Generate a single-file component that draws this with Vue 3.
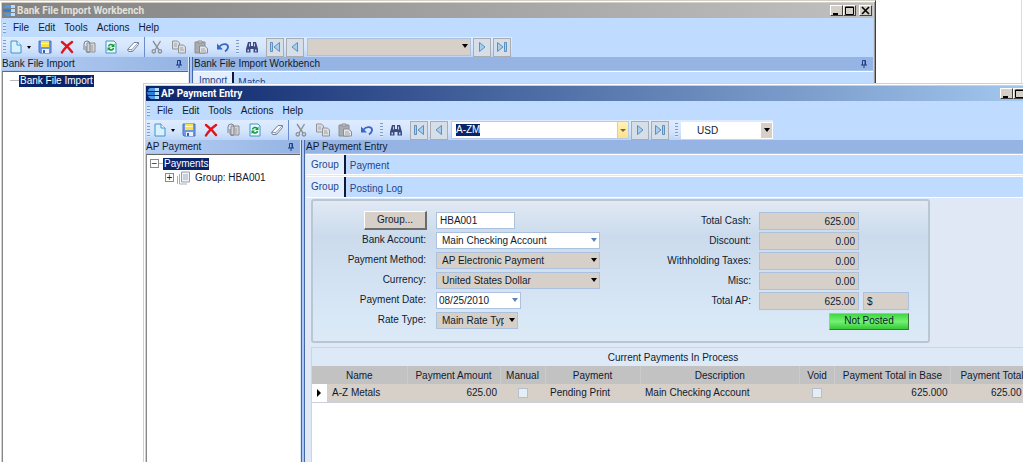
<script setup>
import { ref } from 'vue'

const menus = ['File', 'Edit', 'Tools', 'Actions', 'Help']
const editTools = ['save', 'delete', 'attach', 'refresh', 'erase']
const clipTools = ['cut', 'copy', 'paste', 'undo']

const windows = [
  { id: 'bank', title: 'Bank File Import Workbench', side: 'Bank File Import', main: 'Bank File Import Workbench' },
  { id: 'ap', title: 'AP Payment Entry', side: 'AP Payment', main: 'AP Payment Entry' },
]

const record = ref('A-ZM')
const group = ref('HBA001')
const payDate = ref('08/25/2010')

const totals = [
  { id: 'cash', label: 'Total Cash:', value: '625.00' },
  { id: 'discount', label: 'Discount:', value: '0.00' },
  { id: 'taxes', label: 'Withholding Taxes:', value: '0.00' },
  { id: 'misc', label: 'Misc:', value: '0.00' },
  { id: 'ap-total', label: 'Total AP:', value: '625.00' },
]
</script>

<template>
  <div class="desktop">
    <svg class="defs" aria-hidden="true">
      <symbol id="logo" viewBox="0 0 13 13">
        <path d="M3 1h9v3H1Q1 2 3 1z" fill="#4d9be8" />
        <path d="M0 5h12v3H1Q0 7 0 5z" fill="#2f7fd6" />
        <path d="M1 9h11v3H4Q2 11 1 9z" fill="#4d9be8" />
        <path d="M8 1h4v3H8zM8 5h4v3H8zM8 9h4v3H8z" fill="#b9dcfb" />
      </symbol>
      <symbol id="new" viewBox="0 0 14 14">
        <path d="M2 1h6l4 4v8H2z" fill="#d9f1ff" stroke="#3f94c8" />
        <path d="M8 1v4h4" fill="#fff" stroke="#3f94c8" />
      </symbol>
      <symbol id="save" viewBox="0 0 14 14">
        <path d="M1 1h12v12H2l-1-1z" fill="#6f97e0" stroke="#4a72c4" />
        <path d="M3 1h8v6H3z" fill="#f7e04a" />
        <path d="M3 3.500h8" stroke="#fff8b8" />
        <path d="M4 9h7v4H4z" fill="#e9f0fb" />
        <path d="M5 10h2v3H5z" fill="#3a62b4" />
      </symbol>
      <symbol id="delete" viewBox="0 0 14 14">
        <path d="M2 2c4 3 7 6 10 10M12 2C8 5 4 9 2 12.500" fill="none" stroke="#e0141c" stroke-width="2.400" stroke-linecap="round" />
      </symbol>
      <symbol id="attach" viewBox="0 0 14 14">
        <path d="M5 3h8v9H5z" fill="#d3d5d8" stroke="#8d8f94" />
        <path d="M4 6v4.500a2 2 0 0 0 4 0V4a3 3 0 0 0-6 0v6" fill="none" stroke="#7c7e83" />
        <path d="M10 5v6" stroke="#9b9da2" />
      </symbol>
      <symbol id="refresh" viewBox="0 0 14 14">
        <path d="M2 1h8l2 2v10H2z" fill="#eafaff" stroke="#3f94c8" />
        <path d="M4.500 6.500a2.500 2.500 0 0 1 4.500-1M9.500 8a2.500 2.500 0 0 1-4.500 1" fill="none" stroke="#159a36" stroke-width="1.500" />
        <path d="M10.500 3.500v3.500H7zM3.500 11V7.500H7z" fill="#159a36" />
      </symbol>
      <symbol id="erase" viewBox="0 0 14 14">
        <path d="M1.500 9.500L8 2.500h4.500v2L6.500 11.500h-4z" fill="#f8fafd" stroke="#71809c" />
        <path d="M2 9.500h4L12 3M6 9.500v2" fill="none" stroke="#8d9ab2" />
      </symbol>
      <symbol id="cut" viewBox="0 0 14 14">
        <path d="M3 1l6 9M10.500 1L5 10" fill="none" stroke="#8c9198" stroke-width="1.400" />
        <circle cx="3.800" cy="11.300" r="1.700" fill="none" stroke="#8c9198" stroke-width="1.300" />
        <circle cx="10" cy="11.300" r="1.700" fill="none" stroke="#8c9198" stroke-width="1.300" />
      </symbol>
      <symbol id="copy" viewBox="0 0 14 14">
        <path d="M.5 1h5l2 2v6h-7z" fill="#dcdee0" stroke="#8f949b" />
        <path d="M6.500 5h5l2 2v6h-7z" fill="#dcdee0" stroke="#8f949b" />
        <path d="M2 4h3M2 6h3M8 8h3M8 10h4" stroke="#9fa4ab" />
      </symbol>
      <symbol id="paste" viewBox="0 0 14 14">
        <path d="M1 2h10v11H1z" fill="#a9abae" stroke="#8b8d92" />
        <path d="M4 1h4v2H4z" fill="#d9dbde" stroke="#8b8d92" />
        <path d="M5.500 6h5l3 2.500V13h-8z" fill="#e3e5e8" stroke="#8b8d92" />
        <path d="M7 9h4M7 11h5" stroke="#9fa4ab" />
      </symbol>
      <symbol id="undo" viewBox="0 0 14 14">
        <path d="M3.500 6.500C7 2.500 12.500 4 12 7.500c-.3 2-1.500 3-3 4" fill="none" stroke="#3867c8" stroke-width="1.800" />
        <path d="M1 3.500v6h6z" fill="#3867c8" />
      </symbol>
      <symbol id="find" viewBox="0 0 14 14">
        <path d="M3 2h3v4h2V2h3l2 7v3.500H8.500V9h-3v3.500H1V9z" fill="#3d4a80" />
        <path d="M2.500 9.500h1.500v2H2.500zM10 9.500h1.500v2H10zM4 3.500h1v3H4zM9 3.500h1v3H9z" fill="#c5cff0" />
      </symbol>
      <symbol id="prev" viewBox="0 0 14 14">
        <path d="M9.500 2.500v9L4 7z" fill="#a9cdec" stroke="#5f8fbd" />
      </symbol>
      <symbol id="next" viewBox="0 0 14 14">
        <path d="M4.500 2.500v9L10 7z" fill="#a9cdec" stroke="#5f8fbd" />
      </symbol>
      <symbol id="first" viewBox="0 0 14 14">
        <path d="M2.500 2.500h2v9h-2zM11.500 2.500v9L6 7z" fill="#a9cdec" stroke="#5f8fbd" />
      </symbol>
      <symbol id="last" viewBox="0 0 14 14">
        <path d="M9.500 2.500h2v9h-2zM2.500 2.500v9L8 7z" fill="#a9cdec" stroke="#5f8fbd" />
      </symbol>
      <symbol id="pin" viewBox="0 0 8 8">
        <path d="M2.500 5V.5h3V5M1 5h6M4 5v3M5 .5V5" fill="none" stroke="#1c3f86" />
      </symbol>
      <symbol id="doc" viewBox="0 0 14 14">
        <path d="M4.500 1h8v10h-8z" fill="#eef0f3" stroke="#9a9fa8" />
        <path d="M2.500 3v10H10M.5 5v8" fill="none" stroke="#a9aeb6" />
        <path d="M6 4h5M6 6h5M6 8h5" stroke="#9fb0cc" />
      </symbol>
      <symbol id="minimize" viewBox="0 0 11 9"><path d="M2 7h5v2H2z" fill="#000" /></symbol>
      <symbol id="maximize" viewBox="0 0 11 9"><path d="M1.500 1h8v7.500h-8zM1 1.500h9" fill="none" stroke="#000" /></symbol>
      <symbol id="close" viewBox="0 0 11 9"><path d="M2 1l7 7M9 1L2 8" stroke="#000" stroke-width="1.600" /></symbol>
    </svg>

    <section v-for="w in windows" :key="w.id" class="window" :class="w.id">
      <header class="titlebar">
        <svg class="logo"><use href="#logo" /></svg>
        <h1>{{ w.title }}</h1>
        <button class="caption" aria-label="Minimize"><svg><use href="#minimize" /></svg></button>
        <button class="caption" aria-label="Maximize"><svg><use href="#maximize" /></svg></button>
        <button class="caption close" aria-label="Close"><svg><use href="#close" /></svg></button>
      </header>

      <nav class="menubar">
        <i class="grip"></i>
        <button v-for="m in menus" :key="m">{{ m }}</button>
      </nav>

      <div class="toolbar">
        <div class="strip">
          <i class="grip"></i>
          <button class="tool new" aria-label="New"><svg><use href="#new" /></svg><i class="arrow"></i></button>
          <button v-for="t in editTools" :key="t" class="tool" :aria-label="t"><svg><use :href="'#' + t" /></svg></button>
          <i class="rule"></i>
          <button v-for="t in clipTools" :key="t" class="tool" :aria-label="t"><svg><use :href="'#' + t" /></svg></button>
        </div>
        <div class="strip">
          <i class="grip"></i>
          <button class="tool find" aria-label="Find"><svg><use href="#find" /></svg></button>
          <button class="nav" aria-label="First record"><svg><use href="#first" /></svg></button>
          <button class="nav" aria-label="Previous record"><svg><use href="#prev" /></svg></button>
          <span v-if="w.id === 'bank'" class="combo search off">
            <select aria-label="Record" disabled><option></option></select>
          </span>
          <span v-else class="lookup">
            <span class="lookup-box">
              <span class="lookup-size">{{ record }}</span>
              <input v-model="record" aria-label="Record" />
            </span>
            <button aria-label="Open list"><i class="arrow"></i></button>
          </span>
          <button class="nav" aria-label="Next record"><svg><use href="#next" /></svg></button>
          <button class="nav" aria-label="Last record"><svg><use href="#last" /></svg></button>
        </div>
        <div v-if="w.id === 'ap'" class="strip currency">
          <i class="grip"></i>
          <span class="combo usd"><select aria-label="Currency code"><option>USD</option></select></span>
        </div>
      </div>

      <div class="body">
        <aside>
          <h2><span>{{ w.side }}</span><button aria-label="Pin panel"><svg><use href="#pin" /></svg></button></h2>
          <ul v-if="w.id === 'bank'" class="tree">
            <li class="root"><i class="twig"></i><span class="selected">Bank File Import</span></li>
          </ul>
          <ul v-else class="tree">
            <li><button class="toggle" aria-label="Collapse">−</button><i class="link"></i><span class="selected">Payments</span></li>
            <li class="child"><button class="toggle" aria-label="Expand">+</button><svg><use href="#doc" /></svg><span>Group: HBA001</span></li>
          </ul>
        </aside>
        <i class="splitter"></i>
        <main>
          <h2><span>{{ w.main }}</span><button aria-label="Pin panel"><svg><use href="#pin" /></svg></button></h2>
          <div v-if="w.id === 'bank'" class="tabs">
            <button class="active">Import</button><button>Match</button>
          </div>
          <template v-else>
            <div class="tabs"><button class="active">Group</button><button>Payment</button></div>
            <div class="tabs second"><button class="active">Group</button><button>Posting Log</button></div>
            <div class="page">
              <form class="card" @submit.prevent>
                <div class="fields">
                  <button type="button" class="group">Group...</button>
                  <input v-model="group" class="code" aria-label="Group" />
                  <label for="bank">Bank Account:</label>
                  <span class="combo light wide"><select id="bank"><option>Main Checking Account</option></select></span>
                  <label for="method">Payment Method:</label>
                  <span class="combo off wide"><select id="method" disabled><option>AP Electronic Payment</option></select></span>
                  <label for="currency">Currency:</label>
                  <span class="combo off wide"><select id="currency" disabled><option>United States Dollar</option></select></span>
                  <label for="date">Payment Date:</label>
                  <span class="combo light date"><input id="date" v-model="payDate" /></span>
                  <label for="rate">Rate Type:</label>
                  <span class="combo off rate"><select id="rate" disabled><option>Main Rate Type</option></select></span>
                </div>
                <div class="totals">
                  <template v-for="t in totals" :key="t.id">
                    <label :for="t.id">{{ t.label }}</label>
                    <input :id="t.id" :value="t.value" readonly />
                  </template>
                  <input class="symbol" value="$" aria-label="Currency symbol" readonly />
                  <button type="button" class="status">Not Posted</button>
                </div>
              </form>
              <div class="sheet">
                <table>
                  <caption>Current Payments In Process</caption>
                  <colgroup>
                    <col class="c-mark" /><col class="c-name" /><col class="c-amount" /><col class="c-manual" /><col class="c-pay" />
                    <col /><col class="c-void" /><col class="c-base" /><col class="c-total" />
                  </colgroup>
                  <thead>
                    <tr>
                      <th colspan="2">Name</th><th>Payment Amount</th><th>Manual</th><th>Payment</th>
                      <th>Description</th><th>Void</th><th>Payment Total in Base</th><th>Payment Total</th>
                    </tr>
                  </thead>
                  <tbody>
                    <tr>
                      <td class="mark"><i></i></td><td>A-Z Metals</td><td class="num">625.00</td>
                      <td class="tick"><input type="checkbox" aria-label="Manual" /></td>
                      <td>Pending Print</td><td>Main Checking Account</td>
                      <td class="tick"><input type="checkbox" aria-label="Void" /></td>
                      <td class="num">625.000</td><td class="num total">625.00</td>
                    </tr>
                  </tbody>
                </table>
              </div>
            </div>
          </template>
        </main>
      </div>
    </section>
  </div>
</template>

<style>
body {
  overflow: hidden;
}
</style>

<style scoped>
* {
  box-sizing: border-box;
}
.desktop {
  position: relative;
  height: 100vh;
  overflow: hidden;
  background: linear-gradient(#dcdcdc, #dcdcdc) right 1px top 0 / 1px 100% no-repeat #fff;
  font: 10px/12px "Liberation Sans", Arial, sans-serif;
  color: #101a30;
}
button, input, select {
  font: inherit;
  color: inherit;
  margin: 0;
  padding: 0;
  border: 0;
  border-radius: 0;
  background: none;
  appearance: none;
  outline: none;
  opacity: 1;
}
h1, h2, ul {
  margin: 0;
  padding: 0;
  list-style: none;
  font: inherit;
}
svg {
  display: block;
  flex: none;
  width: 14px;
  height: 14px;
}
.defs {
  position: absolute;
  width: 0;
  height: 0;
}

/* Window frames */
.window {
  position: absolute;
  display: flex;
  flex-direction: column;
  bottom: -10px;
  padding: 2px;
  background: #d4d0c8;
  border: 1px solid #d4d0c8;
  border-right-color: #404040;
  box-shadow: inset 1px 1px #fff, inset -1px 0 #9a9a9a;
}
.window.bank {
  left: -1px;
  right: 147px;
  top: 0;
}
.window.ap {
  left: 143px;
  right: -23px;
  top: 83px;
}
.titlebar {
  display: flex;
  align-items: center;
  flex: none;
  height: 15px;
  padding: 0 1px;
  color: #e4e1da;
  background: linear-gradient(90deg, #828282, #c0c0c0);
}
.ap .titlebar {
  color: #fff;
  background: linear-gradient(90deg, #0a246a, #a6caf0);
}
.logo {
  width: 13px;
  height: 13px;
}
h1 {
  flex: 1;
  margin-left: 1px;
  font: bold 10px/15px Roboto, "Liberation Sans", sans-serif;
}
.caption {
  width: 13px;
  height: 11px;
  background: #d4d0c8;
  border: 1px solid #fff;
  border-right-color: #404040;
  border-bottom-color: #404040;
}
.caption.close {
  margin-left: 3px;
}
.caption svg {
  width: 11px;
  height: 9px;
}
.menubar {
  display: flex;
  align-items: center;
  flex: none;
  height: 19px;
  padding-left: 1px;
  background: #bfdbff;
}
.menubar button {
  margin-left: 9px;
}
.menubar .grip + button {
  margin-left: 7px;
}
.grip {
  flex: none;
  width: 3px;
  height: 14px;
  background: repeating-linear-gradient(#7f9cc8 0 1px, #d8e8fd 1px 3px);
}
.menubar .grip {
  height: 10px;
}

/* Toolbars */
.toolbar {
  display: flex;
  flex: none;
  height: 20px;
  background: #bfdbff;
}
.strip {
  display: flex;
  align-items: center;
  padding-left: 1px;
  background: linear-gradient(#dfecff, #d3e4fc 60%, #bcd5f8);
}
.tool {
  display: flex;
  align-items: center;
  justify-content: center;
  width: 22px;
  height: 20px;
}
.tool.new {
  width: 27px;
  margin-right: 1px;
  gap: 4px;
}
.strip + .strip {
  padding-left: 2px;
}
.tool.find {
  width: 26px;
}
.rule {
  width: 1px;
  height: 20px;
  margin-right: 1px;
  background: #6a8ccb;
}
.arrow {
  border: 3px solid transparent;
  border-top-color: #000;
  border-bottom: 0;
}
.tool.new .arrow {
  border-width: 3px 2px 0;
}
.nav {
  display: flex;
  align-items: center;
  justify-content: center;
  width: 18px;
  height: 19px;
  margin: 0 1px;
  border: 1px solid #a9adb3;
  background: #d6dee8;
}
.lookup {
  display: flex;
  width: 178px;
  height: 18px;
  margin: 0 1px 0 2px;
  padding-left: 4px;
  background: #fff;
  border: 1px solid #b5cbe8;
}
.lookup-box {
  position: relative;
  align-self: center;
  margin-right: auto;
  height: 12px;
  background: #0a246a;
}
.lookup-size {
  visibility: hidden;
}
.lookup-box input {
  position: absolute;
  inset: 0;
  width: 100%;
  color: #fff;
}
.lookup button {
  display: flex;
  align-items: center;
  justify-content: center;
  width: 11px;
  background: linear-gradient(#fff2b8, #ffe08a);
  border-left: 1px solid #e5cf8c;
}
.lookup .arrow {
  border-top-color: #7a6a3a;
}
.strip.currency {
  padding-left: 5px;
}

/* Drop-downs */
.combo {
  position: relative;
  display: block;
  height: 17px;
}
.combo::after {
  content: "";
  position: absolute;
  right: 3px;
  top: 6px;
  border: 3px solid transparent;
  border-top: 4px solid #000;
  border-bottom: 0;
}
.combo select, .combo input {
  display: block;
  width: 100%;
  height: 100%;
  padding: 1px 13px 0 5px;
  border: 1px solid #abc1de;
  background: #fff;
}
.combo.off select {
  background: #d6d0c8;
}
.combo.light::after {
  border-top-color: #5d84b8;
}
.combo input {
  padding-left: 2px;
}
.combo.search {
  width: 164px;
  height: 18px;
  margin: 0 1px 0 2px;
}
.combo.usd {
  width: 92px;
  margin-left: 3px;
}
.combo.usd select {
  padding-left: 15px;
  border-color: #fff;
  background: linear-gradient(#d6d0c8, #d6d0c8) right / 11px 100% no-repeat #fff;
}
.combo.wide {
  width: 164px;
}
.combo.date {
  width: 85px;
}
.combo.rate {
  width: 82px;
}

/* Panels */
.body {
  display: flex;
  flex: 1;
  min-height: 0;
}
aside {
  display: flex;
  flex-direction: column;
  flex: none;
  width: 186px;
}
.ap aside {
  width: 154px;
}
main {
  display: flex;
  flex-direction: column;
  flex: 1;
  min-width: 0;
  background: #dfe8f4;
}
h2 {
  display: flex;
  align-items: center;
  justify-content: space-between;
  flex: none;
  height: 14px;
  padding: 1px 5px 0 1px;
  background: #95b4e3;
  border-bottom: 1px solid #a8c4ee;
}
aside h2 {
  padding-left: 0;
  background: linear-gradient(90deg, #b6cff4, #95b4e3);
}
h2 svg {
  width: 8px;
  height: 8px;
}
.splitter {
  flex: none;
  width: 5px;
  background: linear-gradient(90deg, #dfe8f4 1px, #4468a8 1px 2px, #a9c8f4 2px 4px, #4468a8 4px);
}
.tree {
  flex: 1;
  padding: 2px 0;
  background: #fff;
  border-top: 1px solid #666;
  border-left: 1px solid #888;
}
.tree li {
  display: flex;
  align-items: center;
  height: 13px;
  padding-left: 3px;
}
.tree li.child {
  margin-top: 1px;
  padding-left: 18px;
}
.tree li.root {
  padding-left: 7px;
}
.twig, .link {
  width: 9px;
  height: 1px;
  background: #b8b8b8;
}
.link {
  width: 4px;
}
.selected {
  padding: 0 1px;
  color: #fff;
  background: #0a246a;
}
.toggle {
  width: 9px;
  height: 9px;
  border: 1px solid #8a8a8a;
  line-height: 7px;
  text-align: center;
}
.child svg {
  margin: 0 4px 0 3px;
}
.tabs {
  display: flex;
  flex: none;
  height: 20px;
  margin-left: 1px;
  background: #bfdbff;
  border-top: 1px solid #fff;
  border-bottom: 1px solid #fff;
  color: #24468c;
}
.ap .tabs {
  height: 21px;
}
.ap .tabs.second {
  margin-top: 1px;
  height: 22px;
}
.tabs button {
  padding: 3px 4px 0;
}
.tabs .active {
  padding: 0 5px;
  background: #e4eefc;
  border-right: 2px solid #0c1a40;
}

/* Payment form */
.page {
  display: flex;
  flex-direction: column;
  flex: 1;
  gap: 4px;
  padding: 1px 8px 0 6px;
}
.card {
  display: flex;
  gap: 52px;
  max-width: 619px;
  padding: 9px 19px 10px 0;
  border: 2px solid #b9c6d4;
  border-radius: 3px;
  background: linear-gradient(#e1e9f4, #cbdbec 25%, #d9e8f7 85%, #dce9f6);
}
.fields, .totals {
  display: grid;
  grid-auto-rows: 20px;
  align-items: center;
}
.fields {
  grid-template-columns: 113px 164px;
  column-gap: 10px;
}
.totals {
  grid-template-columns: 99px 100px 46px;
  column-gap: 4px;
  margin-top: 1px;
}
label {
  grid-column: 1;
  text-align: right;
}
.totals label {
  margin-right: 4px;
  white-space: nowrap;
}
.group {
  justify-self: end;
  width: 63px;
  height: 19px;
  margin-right: -1px;
  background: #d6d0c8;
  border: 1px solid #fff;
  border-right: 2px solid #6b6b6b;
  border-bottom: 2px solid #6b6b6b;
}
.code {
  width: 79px;
  height: 17px;
  padding: 0 3px;
  background: #fff;
  border: 1px solid #abc1de;
}
.totals {
  grid-template-columns: 103px 100px 46px;
}
.totals input {
  width: 100%;
  height: 18px;
  padding: 0 3px;
  background: #d6d0c8;
  border: 1px solid #abc1de;
  text-align: right;
}
.totals .symbol {
  grid-row: 5;
  grid-column: 3;
  text-align: left;
}
.status {
  grid-column: 2 / 4;
  grid-row: 6;
  justify-self: end;
  width: 80px;
  height: 17px;
  background: linear-gradient(#3fd83f, #74f074 50%, #35c935);
  border: 1px solid #8fd08f;
  border-right-color: #3b7a3b;
  border-bottom-color: #3b7a3b;
}

/* Payment list */
.sheet {
  flex: 1;
  background: #fff;
  border: 1px solid #c9d5e4;
}
table {
  width: 100%;
  table-layout: fixed;
  border-collapse: collapse;
}
caption {
  height: 18px;
  line-height: 20px;
  background: #dde9f7;
}
.c-mark { width: 15px; }
.c-name { width: 80px; }
.c-amount { width: 93px; }
.c-manual { width: 45px; }
.c-pay { width: 95px; }
.c-void { width: 35px; }
.c-base { width: 116px; }
.c-total { width: 83px; }
th {
  height: 18px;
  padding: 1px 0 0;
  font-weight: normal;
  white-space: nowrap;
  background: #c3c2c2;
  border-right: 1px solid #cdcccc;
}
td {
  height: 18px;
  padding: 0 5px;
  white-space: nowrap;
  background: #d6d0c8;
  border-bottom: 1px solid #c9d0da;
}
.num {
  padding: 0 3px;
  text-align: right;
}
.num.total {
  padding-right: 12px;
}
.mark {
  background: #fff;
}
.mark i {
  display: block;
  width: 0;
  border: 4px solid transparent;
  border-left-color: #000;
  border-right: 0;
}
.tick {
  padding: 0;
  text-align: center;
}
.tick input {
  display: block;
  width: 10px;
  height: 10px;
  margin: 0 auto;
  background: #e6eef5;
  border: 1px solid #b4c0cf;
}
</style>
